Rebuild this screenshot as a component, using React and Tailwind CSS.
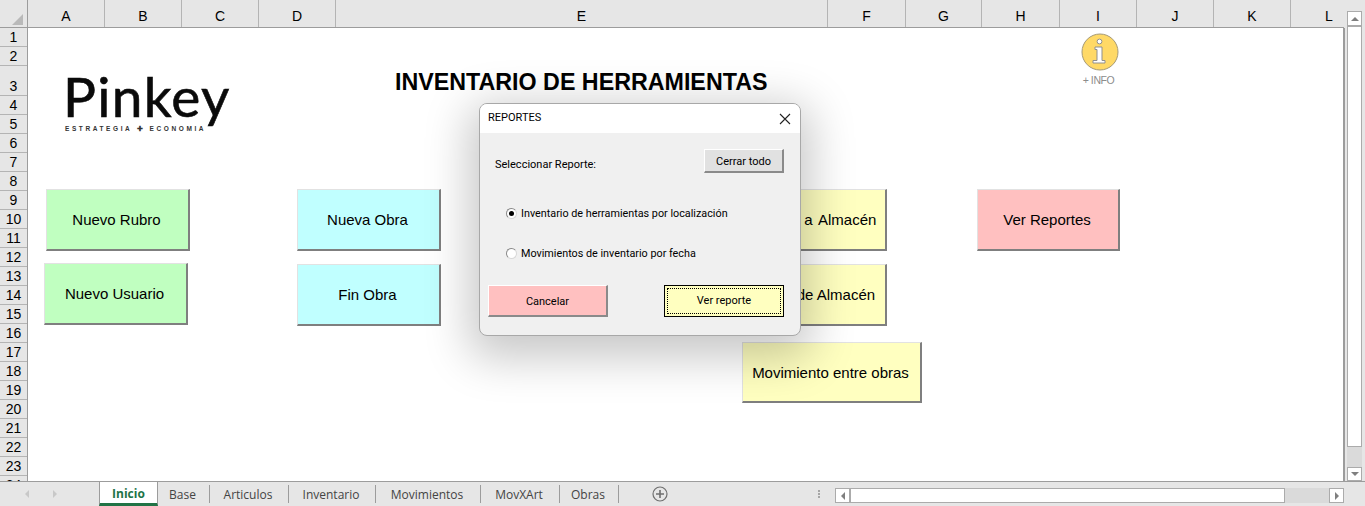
import React from "react";

const columns = [
  { name: "A", width: "w-[77px]" },
  { name: "B", width: "w-[77px]" },
  { name: "C", width: "w-[77px]" },
  { name: "D", width: "w-[77px]" },
  { name: "E", width: "w-[492px]" },
  { name: "F", width: "w-[78px]" },
  { name: "G", width: "w-[76px]" },
  { name: "H", width: "w-[78px]" },
  { name: "I", width: "w-[77px]" },
  { name: "J", width: "w-[77px]" },
  { name: "K", width: "w-[77px]" },
  { name: "L", width: "w-[77px]" },
];

const rows = Array.from({ length: 24 }, (_, i) => i + 1);

const tabs = [
  { name: "Base", width: "w-[52px]" },
  { name: "Articulos", width: "w-[79px]" },
  { name: "Inventario", width: "w-[87px]" },
  { name: "Movimientos", width: "w-[105px]" },
  { name: "MovXArt", width: "w-[79px]" },
  { name: "Obras", width: "w-[59px]" },
];

const shapes = [
  { label: "Nuevo Rubro", color: "bg-[#c0ffc0]", pos: "left-[18px] top-[161px] w-[144px] h-[62px]" },
  { label: "Nuevo Usuario", color: "bg-[#c0ffc0]", pos: "left-[16px] top-[235px] w-[144px] h-[62px]" },
  { label: "Nueva Obra", color: "bg-[#c0ffff]", pos: "left-[269px] top-[161px] w-[144px] h-[62px]" },
  { label: "Fin Obra", color: "bg-[#c0ffff]", pos: "left-[269px] top-[236px] w-[144px] h-[62px]" },
  { label: "Entrada a Almacén", color: "bg-[#ffffc0]", pos: "left-[714px] top-[161px] w-[145px] h-[62px]", extra: "mr-[4px] [word-spacing:2px]" },
  { label: "Salida de Almacén", color: "bg-[#ffffc0]", pos: "left-[714px] top-[236px] w-[145px] h-[62px]" },
  { label: "Movimiento entre obras", color: "bg-[#ffffc0]", pos: "left-[714px] top-[314px] w-[180px] h-[61px]" },
  { label: "Ver Reportes", color: "bg-[#ffc0c0]", pos: "left-[949px] top-[161px] w-[143px] h-[62px]" },
];

const Shape = ({ label, color, pos, extra }) => (
  <div
    className={`absolute flex items-center justify-center border-t border-l border-t-[#e2e2e2] border-l-[#e2e2e2] border-r-2 border-b-2 border-r-[#7f7f7f] border-b-[#7f7f7f] pr-[2px] pt-[2px] text-[15px] text-black ${color} ${pos}`}
  >
    <span className={extra}>{label}</span>
  </div>
);

const Radio = ({ checked, label }) => (
  <label className="flex items-center gap-[4px] text-[10.8px] text-black">
    <span className="flex h-[11px] w-[11px] items-center justify-center rounded-full border border-[#8a8a8a] border-r-[#d8d8d8] border-b-[#d8d8d8] bg-white">
      {checked && <span className="h-[5px] w-[5px] rounded-full bg-black" />}
    </span>
    {label}
  </label>
);

const Dialog = () => (
  <div className="absolute left-[451px] top-[75px] flex h-[233px] w-[322px] flex-col overflow-hidden rounded-[8px] border border-[#a8a8a8] bg-[#f0f0f0] shadow-[0_12px_45px_10px_rgba(0,0,0,0.22)] font-['Roboto',sans-serif]">
    <div className="flex h-[29px] shrink-0 items-center justify-between bg-white pl-[8px] pr-[9px] text-[11px] text-black">
      <span>REPORTES</span>
      <svg width="12" height="12" viewBox="0 0 12 12" fill="none" stroke="#222" strokeWidth="1.1">
        <path d="M1 1l10 10M11 1L1 11" />
      </svg>
    </div>
    <div className="flex flex-1 flex-col pl-[8px] pr-[16px] pt-[16px]">
      <div className="flex items-center justify-between pl-[7px] text-[11px] text-black">
        <span className="mt-[8px]">Seleccionar Reporte:</span>
        <button className="h-[24px] w-[80px] border-t border-l border-t-white border-l-white border-r-2 border-b-2 border-r-[#8a8a8a] border-b-[#8a8a8a] bg-[#e1e1e1] pt-[3px] text-[11px] text-black">
          Cerrar todo
        </button>
      </div>
      <div className="mt-[32px] flex flex-col gap-[24px] pl-[18px]">
        <Radio checked label="Inventario de herramientas por localización" />
        <Radio label="Movimientos de inventario por fecha" />
      </div>
      <div className="mt-[23px] flex justify-between">
        <button className="h-[32px] w-[120px] border-t border-l border-t-white border-l-white border-r-2 border-b-2 border-r-[#8a8a8a] border-b-[#8a8a8a] bg-[#ffc0c0] pt-[3px] text-[11px] text-black">
          Cancelar
        </button>
        <button className="h-[32px] w-[120px] border border-black bg-[#ffffc0] p-[2px] text-[11px] text-black">
          <span className="flex h-full w-full items-center justify-center border border-dotted border-black pt-[1px]">
            Ver reporte
          </span>
        </button>
      </div>
    </div>
  </div>
);

const InfoIcon = () => (
  <svg width="38" height="38" viewBox="0 0 38 38">
    <circle cx="19" cy="19" r="18" fill="#ffd966" stroke="#a59a78" strokeWidth="1" />
    <circle cx="18.5" cy="8.5" r="2.4" fill="#fff" stroke="#8f8f8f" strokeWidth="1" />
    <path
      d="M14 14h7v13.5h3v2.5H12v-2.5h4V16.5h-2z"
      fill="#fff"
      stroke="#8f8f8f"
      strokeWidth="1"
    />
  </svg>
);

const ArrowButton = ({ d, className }) => (
  <div className={`flex shrink-0 items-center justify-center border border-[#ababab] bg-white ${className}`}>
    <svg width="8" height="8" viewBox="0 0 8 8">
      <path d={d} fill="#7f7f7f" />
    </svg>
  </div>
);

const App = () => {
  return (
    <div className="flex h-[506px] w-[1365px] flex-col overflow-hidden bg-[#e6e6e6] font-['Liberation_Sans',Arial,sans-serif]">
      <div className="flex h-[481px] shrink-0">
        <div className="flex w-[1345px] shrink-0 flex-col">
          {/* encabezado de columnas */}
          <div className="flex h-[28px] shrink-0">
            <div className="relative w-[28px] shrink-0 border-b border-r border-[#9c9c9c]">
              <div className="absolute bottom-[2px] right-[4px] h-0 w-0 border-b-[11px] border-l-[11px] border-b-[#b9b9b9] border-l-transparent" />
            </div>
            <div className="flex w-[1316px] overflow-hidden border-b border-[#9c9c9c]">
              {columns.map((col) => (
                <div
                  key={col.name}
                  className={`flex shrink-0 items-end justify-center border-r border-[#b4b4b4] text-[14px] text-black ${col.width}`}
                >
                  {col.name}
                </div>
              ))}
            </div>
          </div>

          <div className="flex min-h-0 flex-1">
            {/* filas */}
            <div className="w-[28px] shrink-0 overflow-hidden border-r border-[#9c9c9c]">
              {rows.map((row) => (
                <div
                  key={row}
                  className={`flex shrink-0 items-end justify-center border-b border-[#b4b4b4] text-[14px] leading-[18px] text-black ${row === 3 ? "h-[30px]" : "h-[19px]"}`}
                >
                  {row}
                </div>
              ))}
            </div>

            {/* hoja */}
            <div className="relative w-[1317px] shrink-0 border-r-2 border-[#9c9c9c] bg-white">
              <div className="absolute left-[35px] top-[35px] text-[#0a0a0a]">
                <div className="text-[55px] leading-[66px] tracking-[1.3px] font-['Lato',sans-serif] [-webkit-text-stroke:0.6px_#0a0a0a]">
                  Pinkey
                </div>
                <div className="ml-[2px] mt-[-4px] whitespace-nowrap text-[6.5px] font-bold leading-[8px] tracking-[2.6px] text-[#333]">
                  ESTRATEGIA ✚ ECONOMIA
                </div>
              </div>
              <div className="absolute left-[367px] top-[40px] text-[23.25px] font-bold leading-[28px] text-black">
                INVENTARIO DE HERRAMIENTAS
              </div>
              <div className="absolute left-[1053px] top-[5px] flex w-[38px] flex-col items-center">
                <InfoIcon />
                <span className="mr-[3px] mt-[3px] text-[10.5px] leading-[12px] tracking-[-0.4px] text-[#8c8c8c]">+ INFO</span>
              </div>
              {shapes.map((shape) => (
                <Shape key={shape.label} {...shape} />
              ))}
              <Dialog />
            </div>
          </div>
        </div>

        {/* barra vertical */}
        <div className="flex flex-1 flex-col pb-0 pl-[2px] pr-[3px] pt-[11px]">
          <ArrowButton d="M4 2l4 4H0z" className="h-[15px] w-[15px]" />
          <div className="h-[421px] w-[15px] shrink-0 border border-[#ababab] bg-white" />
          <div className="w-[15px] flex-1 bg-[#dadada]" />
          <ArrowButton d="M4 6L0 2h8z" className="h-[14px] w-[15px]" />
        </div>
      </div>

      {/* pestañas */}
      <div className="flex h-[25px] shrink-0 items-stretch border-t border-[#9c9c9c] font-['Open_Sans',sans-serif] text-[12px]">
        <div className="flex w-[99px] items-center gap-[22px] pl-[24px]">
          <svg width="6" height="8" viewBox="0 0 6 8"><path d="M5 0v8L1 4z" fill="#c8c8c8" /></svg>
          <svg width="6" height="8" viewBox="0 0 6 8"><path d="M1 0v8l4-4z" fill="#c8c8c8" /></svg>
        </div>
        <div className="flex w-[59px] items-center justify-center border-x border-[#9c9c9c] border-b-[3px] border-b-[#217346] bg-white pt-[3px] font-bold text-[#217346]">
          Inicio
        </div>
        {tabs.map((tab) => (
          <div key={tab.name} className={`flex items-center ${tab.width}`}>
            <span className="flex-1 pt-[1px] pr-[2px] text-center text-[#444]">{tab.name}</span>
            <span className="h-[18px] w-px bg-[#9c9c9c]" />
          </div>
        ))}
        <div className="ml-[33px] flex items-center">
          <svg width="16" height="16" viewBox="0 0 16 16" fill="none" stroke="#6f6f6f">
            <circle cx="8" cy="8" r="7" strokeWidth="1.2" />
            <path d="M8 4v8M4 8h8" strokeWidth="1.6" />
          </svg>
        </div>
        <div className="ml-[150px] flex items-center">
          <div className="grid grid-cols-1 gap-[1px]">
            <span className="h-[2px] w-[2px] bg-[#a6a6a6]" />
            <span className="h-[2px] w-[2px] bg-[#a6a6a6]" />
            <span className="h-[2px] w-[2px] bg-[#a6a6a6]" />
          </div>
        </div>
        <div className="ml-[15px] mt-[6px] flex h-[15px] w-[509px]">
          <ArrowButton d="M6 0v8L2 4z" className="w-[15px]" />
          <div className="w-[435px] border border-[#ababab] bg-white" />
          <div className="flex-1 bg-[#dadada]" />
          <ArrowButton d="M2 0v8l4-4z" className="w-[15px]" />
        </div>
      </div>
    </div>
  );
};

export default App;
